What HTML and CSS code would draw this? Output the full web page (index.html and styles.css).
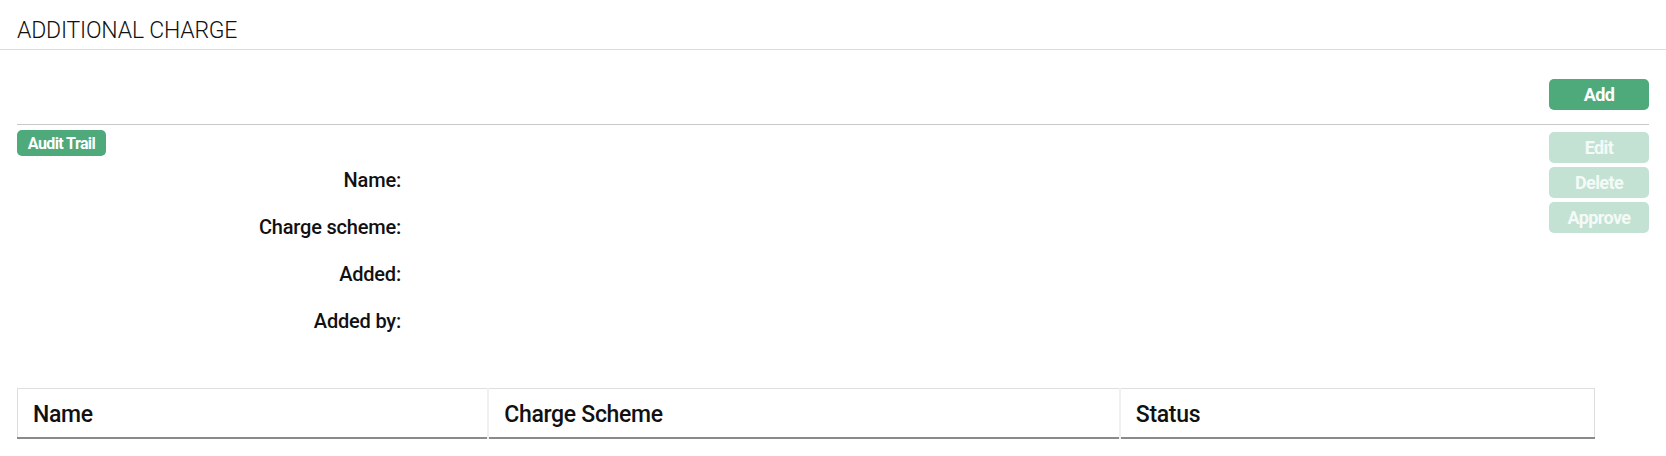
FILE: index.html
```html
<!DOCTYPE html>
<html>
<head>
<meta charset="utf-8">
<link rel="stylesheet" href="styles.css">
</head>
<body>
<div class="page">
  <header class="page-header">
    <h1 class="page-title">ADDITIONAL CHARGE</h1>
  </header>
  <main class="content">
    <div class="toolbar">
      <button class="btn btn-primary btn-wide">Add</button>
    </div>
    <section class="detail">
      <div class="detail-main">
        <button class="btn btn-primary btn-small">Audit Trail</button>
        <dl class="fields">
          <div class="field"><dt>Name:</dt><dd></dd></div>
          <div class="field"><dt>Charge scheme:</dt><dd></dd></div>
          <div class="field"><dt>Added:</dt><dd></dd></div>
          <div class="field"><dt>Added by:</dt><dd></dd></div>
        </dl>
      </div>
      <div class="actions">
        <button class="btn btn-disabled btn-wide">Edit</button>
        <button class="btn btn-disabled btn-wide">Delete</button>
        <button class="btn btn-disabled btn-wide">Approve</button>
      </div>
    </section>
    <table class="grid">
      <thead>
        <tr>
          <th class="col-name">Name</th>
          <th class="col-scheme">Charge Scheme</th>
          <th class="col-status">Status</th>
        </tr>
      </thead>
    </table>
  </main>
</div>
</body>
</html>
```

FILE: styles.css
```css
* { box-sizing: border-box; }
html, body {
  margin: 0;
  padding: 0;
  background: #fff;
  font-family: Roboto, "Liberation Sans", sans-serif;
  color: #111;
}
.page-header {
  height: 50px;
  border-bottom: 1px solid #dcdcdc;
  padding: 0 17px;
}
.page-title {
  margin: 0;
  padding-top: 17px;
  font-size: 23px;
  line-height: 27px;
  font-weight: 300;
  letter-spacing: -0.2px;
  color: #111;
}
.content {
  padding: 0 17px;
}
.toolbar {
  display: flex;
  justify-content: flex-end;
  padding-top: 29px;
  padding-bottom: 14px;
  border-bottom: 1px solid #c8c8c8;
}
.btn {
  border: 0;
  border-radius: 5px;
  font-family: Roboto, "Liberation Sans", sans-serif;
  font-weight: 700;
  color: #fff;
  padding: 0;
  cursor: pointer;
  letter-spacing: -0.6px;
}
.btn-primary { background: #4ea97b; }
.btn-disabled { background: #c3e2d3; color: #f4faf7; }
.btn-wide {
  width: 100px;
  height: 31px;
  font-size: 18px;
}
.btn-small {
  width: 89px;
  height: 26px;
  font-size: 16px;
}
.detail {
  display: flex;
  justify-content: space-between;
  padding-top: 5px;
}
.detail-main {
  display: flex;
  flex-direction: column;
  align-items: flex-start;
}
.actions {
  display: flex;
  flex-direction: column;
  gap: 4px;
  padding-top: 2px;
}
.fields {
  margin: 0;
  padding-top: 12px;
}
.field {
  display: flex;
  height: 47px;
}
.field dt {
  width: 384px;
  text-align: right;
  font-size: 20px;
  font-weight: 500;
  line-height: 24px;
  letter-spacing: -0.2px;
}
.field dd { margin: 0; }
.grid {
  margin-top: 32px;
  width: 1578px;
  border-collapse: collapse;
  border: 1px solid #dedede;
  border-bottom: 2px solid #8a8a8a;
}
.grid th {
  height: 49px;
  text-align: left;
  padding: 3px 15px 0;
  font-size: 23px;
  font-weight: 500;
  letter-spacing: -0.3px;
  border-left: 2px solid #f0f0f0;
  color: #111;
}
.grid th:first-child { border-left: 0; }
.col-name { width: 471px; }
.col-scheme { width: 632px; }
.col-status { width: 475px; }
```
